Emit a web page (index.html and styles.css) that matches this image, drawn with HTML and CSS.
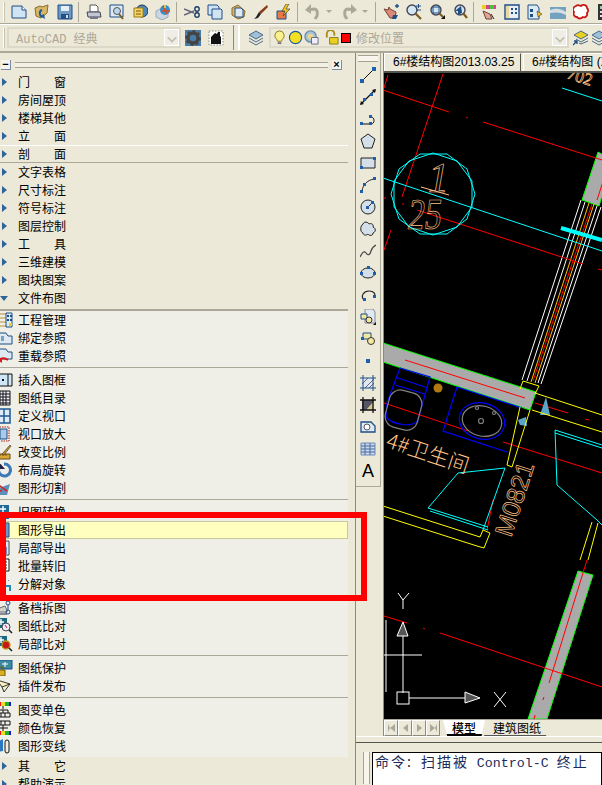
FILE: index.html
```html
<!DOCTYPE html>
<html lang="zh-CN">
<head>
<meta charset="utf-8">
<title>AutoCAD</title>
<link rel="stylesheet" href="styles.css">
</head>
<body>
<svg class="defs" aria-hidden="true">
  <defs>
    <symbol id="new" viewBox="0 0 16 16"><path d="M1 2h10l4 4v8H1z" fill="#cfe3f3" stroke="#1d4f86"/><path d="M11 2v4h4" fill="#fff" stroke="#1d4f86"/></symbol>
    <symbol id="open" viewBox="0 0 16 16"><path d="M1 4l5-2 2 1 6-2-1 8-6 5-5-2z" fill="#d8b868" stroke="#8a6a28"/><path d="M8 6c-3 1-3 5 0 7" fill="none" stroke="#1d5a96" stroke-width="2"/><path d="M6 12l5 3-1-5z" fill="#1d5a96"/></symbol>
    <symbol id="save" viewBox="0 0 16 16"><path d="M1 1h14v14H1z" fill="#6d9ac4" stroke="#1d4f86"/><path d="M4 2h8v5H4z" fill="#e8eef4"/><path d="M4 10h8v5H4z" fill="#244f7e"/><path d="M9 11h2v3H9z" fill="#cfe3f3"/></symbol>
    <symbol id="plot" viewBox="0 0 16 16"><path d="M4 1h6l2 2v5H4z" fill="#fff" stroke="#555"/><path d="M1 8h13l1 5H2z" fill="#c3c6d0" stroke="#445"/><path d="M4 13h8v2H4z" fill="#778"/></symbol>
    <symbol id="preview" viewBox="0 0 16 16"><path d="M1 1h13v12H1z" fill="#dfe9f2" stroke="#1d4f86"/><circle cx="8" cy="7" r="3.5" fill="#bcd7ec" stroke="#555"/><path d="M10 10l4 5" stroke="#7a5a20" stroke-width="2"/></symbol>
    <symbol id="publish" viewBox="0 0 16 16"><circle cx="10" cy="7" r="6" fill="#4d88b8" stroke="#234"/><path d="M2 4h9v9H2z" fill="#f2d860" stroke="#9a7a18"/><path d="M4 7h5M4 10h5" stroke="#8a4a18"/></symbol>
    <symbol id="web3d" viewBox="0 0 16 16"><path d="M1 7l6-3 6 3v6l-6 3-6-3z" fill="#cdd7e3" stroke="#9ab"/><circle cx="10" cy="6" r="5" fill="#3b8fc8"/><path d="M8 2l4 8M6 7h9" stroke="#d84a28" stroke-width="1.5"/><path d="M10 1v3" stroke="#e8c030" stroke-width="2"/></symbol>
    <symbol id="cut" viewBox="0 0 16 16"><path d="M0 5l10 4M0 11l10-4" stroke="#667" stroke-width="1.4"/><circle cx="13" cy="5" r="2.2" fill="none" stroke="#1d3f66" stroke-width="1.4"/><circle cx="13" cy="11" r="2.2" fill="none" stroke="#1d3f66" stroke-width="1.4"/></symbol>
    <symbol id="copy" viewBox="0 0 16 16"><path d="M1 1h9l2 2v8H1z" fill="#cfe3f3" stroke="#1d4f86"/><path d="M5 5h9l1 1v9H5z" fill="#cfe3f3" stroke="#1d4f86"/></symbol>
    <symbol id="paste" viewBox="0 0 16 16"><path d="M2 4l6-3 7 6-1 6-6 2-6-4z" fill="#d8b868" stroke="#8a6a28"/><path d="M5 4h6l2 2v7H5z" fill="#dfe9f2" stroke="#1d4f86"/></symbol>
    <symbol id="brush" viewBox="0 0 16 16"><path d="M14 1l1 2-7 7-2-2z" fill="#8a3a18"/><path d="M6 8l2 2-3 4-4 1 2-2z" fill="#222"/></symbol>
    <symbol id="match" viewBox="0 0 16 16"><path d="M1 7h9v8H1z" fill="#e87848" stroke="#1d4f86"/><path d="M10 0l-4 7h3l-2 5 7-7h-4l3-5z" fill="#f2c820" stroke="#333" stroke-width=".6"/></symbol>
    <symbol id="undo" viewBox="0 0 16 16"><path d="M3 6l6-1c3 0 4 3 3 7l-2 3" fill="none" stroke="#aca899" stroke-width="3"/><path d="M6 0v10L0 6z" fill="#aca899"/></symbol>
    <symbol id="redo" viewBox="0 0 16 16"><path d="M13 6L7 5c-3 0-4 3-3 7l2 3" fill="none" stroke="#aca899" stroke-width="3"/><path d="M10 0v10l6-4z" fill="#aca899"/></symbol>
    <symbol id="pan" viewBox="0 0 16 16"><path d="M1 5l6 9h5l1-6-6-3-1-2-1 3z" fill="#d98a78" stroke="#7a4030"/><path d="M12 2h4M14 0v4" stroke="#1d4f86" stroke-width="1.4"/><path d="M10 11l5 0-2 4H9z" fill="#1d4f86"/></symbol>
    <symbol id="zoomr" viewBox="0 0 16 16"><circle cx="6" cy="6" r="5" fill="#d3e6f2" stroke="#445" stroke-width="1.4"/><path d="M9 9l6 6" stroke="#7a5a20" stroke-width="2.2"/><path d="M10 2h5M12.500 0v4M10 6h5" stroke="#1d4f86"/></symbol>
    <symbol id="zoomw" viewBox="0 0 16 16"><circle cx="7" cy="6" r="5" fill="#d3e6f2" stroke="#445" stroke-width="1.4"/><path d="M4 3h6v6H4z" fill="none" stroke="#1d4f86"/><path d="M10 9l4 4" stroke="#7a5a20" stroke-width="2.2"/><path d="M12 15h4v-4z" fill="#111"/></symbol>
    <symbol id="zoomp" viewBox="0 0 16 16"><circle cx="8" cy="6" r="5" fill="#d3e6f2" stroke="#445" stroke-width="1.4"/><path d="M11 9l4 5" stroke="#7a5a20" stroke-width="2.2"/><path d="M9 2L3 7h3v4l4-2z" fill="#1d4f86"/></symbol>
    <symbol id="props" viewBox="0 0 16 16"><path d="M1 1h14v4H1z" fill="#d8408a"/><path d="M1 1h4v4H1z" fill="#e8d020"/><path d="M9 1h4v4H9z" fill="#4ac040"/><path d="M2 7l7 3 2 5H5z" fill="#d9a898" stroke="#7a4030"/><path d="M10 10l3 5" stroke="#222"/></symbol>
    <symbol id="design" viewBox="0 0 16 16"><path d="M1 1h14v14H1z" fill="#e8eef4" stroke="#1d4f86" stroke-width="1.4"/><path d="M2 2h3v12H2z" fill="#e8d8a0"/><path d="M7 4h2v2H7zM11 4h2v2h-2zM7 8h2v2H7zM11 8h2v2h-2z" fill="#1d4f86"/></symbol>
    <symbol id="sheet" viewBox="0 0 16 16"><path d="M1 1h9l2 3v11H1z" fill="#dfe9f2" stroke="#1d4f86"/><path d="M3 5h3v3H3zM3 10h3v3H3z" fill="#1d4f86"/><path d="M10 7l5 3-4 3z" fill="#e8c030" stroke="#222" stroke-width=".5"/></symbol>
    <symbol id="tool" viewBox="0 0 16 16"><path d="M0 3h16v12H0z" fill="#72a2be"/><path d="M0 6c6-2 10-2 16 2v3C10 8 6 8 0 9z" fill="#d8dde2"/></symbol>
    <symbol id="cloud" viewBox="0 0 16 16"><path d="M3 2c2-2 4 0 5 0 2-2 6-1 6 2 2 2 1 4 0 5 1 3-2 5-4 4-2 2-5 2-6 0-3 0-4-3-3-5-2-2-1-5 2-6z" fill="#fff" stroke="#c81818" stroke-width="1.8"/></symbol>
    <symbol id="calc" viewBox="0 0 16 16"><path d="M2 0h12v16H2z" fill="#333"/><path d="M4 2h8v3H4z" fill="#8fd0a0"/><path d="M4 7h2v2H4zM7 7h2v2H7zM10 7h2v2h-2zM4 11h2v2H4zM7 11h2v2H7zM10 11h2v2h-2z" fill="#e8e8e8"/></symbol>
    <symbol id="gear" viewBox="0 0 16 16"><path d="M0 0h16v16H0z" fill="#4a7ca8"/><circle cx="8" cy="8" r="5" fill="none" stroke="#444" stroke-width="3.4"/><circle cx="8" cy="8" r="7" fill="none" stroke="#444" stroke-width="2" stroke-dasharray="2.400 3"/></symbol>
    <symbol id="dwg" viewBox="0 0 16 16"><path d="M1 1h14v14H1z" fill="#fff" stroke="#888" stroke-dasharray="1.500 1.500"/><path d="M3 7l4-4 2 1 1-2h2v4l1 1v7H3z" fill="#111"/></symbol>
    <symbol id="layers" viewBox="0 0 16 16"><path d="M8 1l7 4-7 4-7-4z" fill="#9fc0d8" stroke="#4a6a88"/><path d="M1 8l7 4 7-4M1 11l7 4 7-4" fill="none" stroke="#4a6a88"/></symbol>
    <symbol id="bulb" viewBox="0 0 16 16"><path d="M8 1a5 5 0 0 1 3 9l-1 2H6l-1-2a5 5 0 0 1 3-9z" fill="#fbf090" stroke="#8a7a18"/><path d="M6 13h4v2H6z" fill="#778"/></symbol>
    <symbol id="sun" viewBox="0 0 16 16"><circle cx="8" cy="8" r="6.500" fill="#f4e020" stroke="#1d5a96" stroke-width="1.2"/></symbol>
    <symbol id="freeze" viewBox="0 0 16 16"><circle cx="7" cy="7" r="6" fill="#a8c4dc" stroke="#6a8aa8" stroke-width="1.4"/><circle cx="7" cy="7" r="3" fill="#e8d890"/><path d="M8 8h7v7H8z" fill="#eef" stroke="#667"/></symbol>
    <symbol id="lock" viewBox="0 0 16 16"><path d="M3 8V4a4 4 0 0 1 8 0v2" fill="none" stroke="#a89018" stroke-width="2"/><path d="M6 8h9v7H6z" fill="#e8d020" stroke="#8a7a18"/></symbol>
    <symbol id="layerprev" viewBox="0 0 16 16"><path d="M8 1l7 4-7 4-7-4z" fill="#e8d020" stroke="#4a6a88"/><path d="M3 9l5 3 7-4M6 13l2 1 7-3" fill="none" stroke="#4a6a88"/><path d="M0 15l4-4M1 11h3v3" fill="none" stroke="#1d4f86" stroke-width="1.300"/></symbol>
    <symbol id="v-line" viewBox="0 0 16 16"><path d="M2 14L14 2" stroke="#111"/><path d="M0 12h4v4H0zM12 0h4v4h-4z" fill="#1d5fae"/></symbol>
    <symbol id="v-xline" viewBox="0 0 16 16"><path d="M1 15L15 1" stroke="#111" stroke-width="1.200"/><path d="M0 16l4-1-3-3zM16 0l-4 1 3 3z" fill="#111"/><path d="M3 9h3v3H3zM10 4h3v3h-3z" fill="#1d5fae"/></symbol>
    <symbol id="v-pline" viewBox="0 0 16 16"><path d="M2 13h9c4 0 4-7 0-7" fill="none" stroke="#111"/><path d="M0 11h3v3H0zM9 11h3v3H9zM9 4h3v3H9z" fill="#1d5fae"/></symbol>
    <symbol id="v-polygon" viewBox="0 0 16 16"><path d="M8 1l7 5-3 9H4L1 6z" fill="#d3e0ea" stroke="#222"/></symbol>
    <symbol id="v-rect" viewBox="0 0 16 16"><path d="M1 3h14v10H1z" fill="#d3e0ea" stroke="#222"/><path d="M0 11h3v3H0zM13 2h3v3h-3z" fill="#1d5fae"/></symbol>
    <symbol id="v-arc" viewBox="0 0 16 16"><path d="M2 14C3 7 8 3 14 2" fill="none" stroke="#222"/><path d="M0 13h3v3H0zM3 6h3v3H3zM13 0h3v3h-3z" fill="#1d5fae"/></symbol>
    <symbol id="v-circle" viewBox="0 0 16 16"><circle cx="8" cy="8" r="7" fill="#d3e0ea" stroke="#222"/><path d="M8 8l4-4" stroke="#222"/><path d="M6 7h3v3H6zM11 2h3v3h-3z" fill="#1d5fae"/></symbol>
    <symbol id="v-cloud" viewBox="0 0 16 16"><path d="M3 3c1-3 5-2 6 0 2-1 5 0 4 3 3 1 3 5 0 6 0 3-4 3-5 1-2 2-5 1-5-1-3-1-3-7 0-9z" fill="#d3e0ea" stroke="#222"/></symbol>
    <symbol id="v-spline" viewBox="0 0 16 16"><path d="M0 14c2-4 4-7 6-4s4 2 5-2 3-5 5-6" fill="none" stroke="#444" stroke-width="1.200"/></symbol>
    <symbol id="v-ellipse" viewBox="0 0 16 16"><ellipse cx="8" cy="8" rx="7" ry="5" fill="#d3e0ea" stroke="#222"/><path d="M0 7h3v3H0zM13 7h3v3h-3zM7 1h3v3H7z" fill="#1d5fae"/></symbol>
    <symbol id="v-earc" viewBox="0 0 16 16"><path d="M4 13c-4-4 0-9 5-9s7 3 5 6" fill="none" stroke="#222" stroke-width="1.200"/><path d="M3 11h3v3H3zM13 8h3v3h-3z" fill="#1d5fae"/></symbol>
    <symbol id="v-block" viewBox="0 0 16 16"><path d="M5 0h8l2 3v11H5z" fill="#dfe9f2" stroke="#889"/><path d="M1 5h6v5H1z" fill="#f2e8a0" stroke="#1d4f86"/><circle cx="9" cy="11" r="3" fill="#f2e8a0" stroke="#333"/><path d="M13 16h3v-3z" fill="#111"/></symbol>
    <symbol id="v-mkblock" viewBox="0 0 16 16"><path d="M3 2h8v6H3z" fill="#f2e8a0" stroke="#1d4f86"/><circle cx="11" cy="10" r="3.500" fill="#f2e8a0" stroke="#333"/><path d="M1 6h3v3H1z" fill="#1d5fae"/></symbol>
    <symbol id="v-point" viewBox="0 0 16 16"><path d="M6 6h4v4H6z" fill="#1d5fae"/></symbol>
    <symbol id="v-hatch" viewBox="0 0 16 16"><path d="M2 3h12v10H2z" fill="#dfe9f2"/><path d="M5 13l9-9M2 9l6-6M9 13l5-5" stroke="#667"/><path d="M3 0v16M13 0v16M0 3h16M0 13h16" stroke="#1d4f86"/></symbol>
    <symbol id="v-gradient" viewBox="0 0 16 16"><path d="M2 3h12v10H2z" fill="#556"/><path d="M6 13l8-9v9z" fill="#d8c890"/><path d="M3 0v16M13 0v16M0 3h16M0 13h16" stroke="#111" stroke-width="1.300"/></symbol>
    <symbol id="v-region" viewBox="0 0 16 16"><path d="M1 3h10l4 4v6H1z" fill="#dfe9f2" stroke="#1d4f86" stroke-width="1.300"/><circle cx="7" cy="8" r="3" fill="#fff" stroke="#556"/></symbol>
    <symbol id="v-table" viewBox="0 0 16 16"><path d="M1 2h14v12H1z" fill="#c8d8ec" stroke="#6a88b8"/><path d="M1 5h14M1 8h14M1 11h14M5 2v12M10 2v12" stroke="#4a6a9c"/></symbol>
    <symbol id="l-proj" viewBox="0 0 16 16"><path d="M0 2h9M0 6h9M0 10h9M0 14h9" stroke="#b89030"/><path d="M9 1h6v14H9z" fill="#dfe9f2" stroke="#1d4f86"/><path d="M10 3h2v2h-2zM13 3h2v2h-2zM10 7h2v2h-2zM13 7h2v2h-2z" fill="#1d4f86"/><path d="M12 11h3v3h-3z" fill="#e8d020"/></symbol>
    <symbol id="l-bind" viewBox="0 0 16 16"><path d="M0 3h9l2 3h4v8H0z" fill="#dfe9f2" stroke="#1d4f86"/><path d="M4 6h3v5H4z" fill="#7aa0c8"/></symbol>
    <symbol id="l-reload" viewBox="0 0 16 16"><path d="M0 1h9l2 3h4v7H0z" fill="#dfe9f2" stroke="#1d4f86"/><path d="M2 15c0-5 5-6 9-3" fill="none" stroke="#d81818" stroke-width="2"/><path d="M0 11h5v4z" fill="#d81818"/></symbol>
    <symbol id="l-frame" viewBox="0 0 16 16"><path d="M0 2h15v12H0z" fill="#cfe6f6" stroke="#111"/><path d="M11 2v12" stroke="#111"/><path d="M5 7h2v2H5z" fill="#111"/></symbol>
    <symbol id="l-grid" viewBox="0 0 16 16"><path d="M0 1h13v14H0z" fill="#eef" stroke="#111"/><path d="M0 4h13M0 7h13M0 10h13M0 13h13M3 1v14M6 1v14M9 1v14" stroke="#111"/></symbol>
    <symbol id="l-view" viewBox="0 0 16 16"><path d="M1 1h12v14H1zM1 8h12M7 1v14" fill="#dfeaf4" stroke="#1d5a96" stroke-width="1.500"/></symbol>
    <symbol id="l-zoom" viewBox="0 0 16 16"><path d="M0 1h12v14H0z" fill="none" stroke="#a81818" stroke-dasharray="1.500 1"/><path d="M3 3h7v10H3z" fill="#a8cce8" stroke="#1d4f86"/></symbol>
    <symbol id="l-scale" viewBox="0 0 16 16"><path d="M0 10h13v5H0z" fill="#d8a838" stroke="#6a4a10"/><path d="M3 10v2M6 10v2M9 10v2" stroke="#6a4a10"/><path d="M5 10l8-9 1 1-7 9z" fill="#c89020" stroke="#333" stroke-width=".6"/></symbol>
    <symbol id="l-rotate" viewBox="0 0 16 16"><path d="M3 4a6 6 0 1 0 4-2" fill="none" stroke="#3a78b8" stroke-width="3"/><path d="M2 0v7h6z" fill="#224"/></symbol>
    <symbol id="l-cut" viewBox="0 0 16 16"><path d="M0 9l13-5-3 11H0z" fill="#5a90c0"/><path d="M0 4l10 7M0 13l5-3" stroke="#c82828" stroke-width="1.600"/></symbol>
    <symbol id="l-old" viewBox="0 0 16 16"><path d="M0 1h12v14H0z" fill="#1d6a96"/><path d="M6 2v7M3 5h6" stroke="#fff" stroke-width="1.400"/></symbol>
    <symbol id="l-export" viewBox="0 0 16 16"><path d="M0 1h12v14H0z" fill="#6d9ac4" stroke="#1d4f86"/><path d="M3 2h6v5H3z" fill="#eef"/><path d="M3 10h6v5H3z" fill="#2d5a8a"/></symbol>
    <symbol id="l-part" viewBox="0 0 16 16"><path d="M0 1h12v14H0z" fill="#dfe9f2" stroke="#444"/><path d="M2 7h8v7H2z" fill="#6d8ac4"/><path d="M3 3h6" stroke="#444"/></symbol>
    <symbol id="l-batch" viewBox="0 0 16 16"><path d="M2 1h10v12H2z" fill="#fff" stroke="#111"/><path d="M4 4h6M4 7h6M4 10h6" stroke="#111"/><path d="M0 12l3 3h6" fill="none" stroke="#111"/></symbol>
    <symbol id="l-explode" viewBox="0 0 16 16"><path d="M7 9h7v6h-2v-4H9v4H7z" fill="#1d8ab8"/><path d="M3 3h1v1H3zM8 1h1v1H8zM5 6h1v1H5zM11 4h1v1h-1z" fill="#6a8ad8"/><path d="M1 9h3v3H1z" fill="#d8b020"/><path d="M1 13h3v2H1z" fill="#1d5a96"/></symbol>
    <symbol id="l-archive" viewBox="0 0 16 16"><path d="M0 9l8-3 2 4v2H0z" fill="#d4d4cc" stroke="#667"/><path d="M0 14h10" stroke="#667" stroke-width="1.500"/><circle cx="11" cy="3" r="2" fill="none" stroke="#1d4f86"/><circle cx="11" cy="12" r="2" fill="none" stroke="#1d4f86"/><path d="M11 5v5" stroke="#1d4f86"/></symbol>
    <symbol id="l-diff" viewBox="0 0 16 16"><path d="M0 0h10v10H0z" fill="#1d6a80"/><path d="M4 1v6M1 4h6" stroke="#fff" stroke-width="1.400"/><circle cx="9" cy="9" r="4" fill="#eef" stroke="#444"/><path d="M8 7l2 3" stroke="#c81818"/><path d="M12 12l3 3" stroke="#222" stroke-width="1.600"/></symbol>
    <symbol id="l-diffp" viewBox="0 0 16 16"><path d="M0 0h10v10H0z" fill="#1d6a80"/><path d="M4 1v6M1 4h6" stroke="#fff" stroke-width="1.400"/><circle cx="9" cy="9" r="4" fill="#c81818" stroke="#b89818" stroke-width="1.300"/><path d="M12 12l3 3" stroke="#222" stroke-width="1.600"/></symbol>
    <symbol id="l-protect" viewBox="0 0 16 16"><path d="M1 0h14v9H1z" fill="#3a8aa0" stroke="#1d4f86"/><path d="M8 2v5M5 4h6" stroke="#fff"/><path d="M0 10h8v6H0z" fill="#d8b020" stroke="#6a5a10"/><path d="M2 10V7h4v3" fill="none" stroke="#6a5a10"/></symbol>
    <symbol id="l-plugin" viewBox="0 0 16 16"><path d="M0 2l13 4-6 8-2-5z" fill="#f8f0c0" stroke="#333"/><path d="M5 9l8-3" stroke="#333"/></symbol>
    <symbol id="l-mono" viewBox="0 0 16 16"><path d="M0 0h4v4H0z" fill="#e81818"/><path d="M4 0h4v4H4z" fill="#e8e020"/><path d="M8 0h4v4H8z" fill="#20b030"/><path d="M12 0h2v4h-2z" fill="#1818e0"/><path d="M6 4v3M1 8h10M1 8v3M6 8v3M11 8v3M0 11h13v4H0zM4 11v4M8 11v4" fill="none" stroke="#111"/></symbol>
    <symbol id="l-restore" viewBox="0 0 16 16"><path d="M0 1h13v4H0zM4 1v4M8 1v4M6 5v3M1 8h10" fill="none" stroke="#111"/><path d="M0 11h4v4H0z" fill="#e81818"/><path d="M4 11h4v4H4z" fill="#e8e020"/><path d="M8 11h4v4H8z" fill="#20b030"/><path d="M12 11h2v4h-2z" fill="#1818e0"/><path d="M6 8v3" stroke="#111"/></symbol>
    <symbol id="l-line" viewBox="0 0 16 16"><path d="M0 4l6-3v12l-6 1z" fill="#2a78c0"/><path d="M8 13V4a2 2 0 0 1 4 0v9a2 2 0 0 1-4 0z" fill="none" stroke="#111"/></symbol>
  </defs>
</svg>

<header class="tool-rows">
  <div class="toolbar row-one">
    <span class="grip"></span>
    <span class="btn"><svg class="ic"><use href="#new"/></svg></span>
    <span class="btn"><svg class="ic"><use href="#open"/></svg></span>
    <span class="btn"><svg class="ic"><use href="#save"/></svg></span>
    <span class="sep"></span>
    <span class="btn"><svg class="ic"><use href="#plot"/></svg></span>
    <span class="btn"><svg class="ic"><use href="#preview"/></svg></span>
    <span class="btn"><svg class="ic"><use href="#publish"/></svg></span>
    <span class="btn"><svg class="ic"><use href="#web3d"/></svg></span>
    <span class="sep"></span>
    <span class="btn"><svg class="ic"><use href="#cut"/></svg></span>
    <span class="btn"><svg class="ic"><use href="#copy"/></svg></span>
    <span class="btn"><svg class="ic"><use href="#paste"/></svg></span>
    <span class="btn"><svg class="ic"><use href="#brush"/></svg></span>
    <span class="btn"><svg class="ic"><use href="#match"/></svg></span>
    <span class="sep"></span>
    <span class="btn btn-drop"><svg class="ic"><use href="#undo"/></svg><i class="mini"></i></span>
    <span class="btn btn-drop"><svg class="ic"><use href="#redo"/></svg><i class="mini"></i></span>
    <span class="sep"></span>
    <span class="btn"><svg class="ic"><use href="#pan"/></svg></span>
    <span class="btn"><svg class="ic"><use href="#zoomr"/></svg></span>
    <span class="btn"><svg class="ic"><use href="#zoomw"/></svg></span>
    <span class="btn"><svg class="ic"><use href="#zoomp"/></svg></span>
    <span class="sep"></span>
    <span class="btn"><svg class="ic"><use href="#props"/></svg></span>
    <span class="btn"><svg class="ic"><use href="#design"/></svg></span>
    <span class="btn"><svg class="ic"><use href="#sheet"/></svg></span>
    <span class="btn"><svg class="ic"><use href="#tool"/></svg></span>
    <span class="btn"><svg class="ic"><use href="#cloud"/></svg></span>
    <span class="btn"><svg class="ic"><use href="#calc"/></svg></span>
  </div>
  <div class="toolbar row-two">
    <span class="grip"></span>
    <div class="combo combo-workspace">
      <span class="combo-text">AutoCAD 经典</span>
      <span class="combo-arrow"></span>
    </div>
    <span class="btn btn-after"><svg class="ic"><use href="#gear"/></svg></span>
    <span class="btn"><svg class="ic"><use href="#dwg"/></svg></span>
    <span class="double-grip"></span>
    <span class="btn btn-layers"><svg class="ic"><use href="#layers"/></svg></span>
    <div class="combo combo-layer">
      <svg class="ic-small"><use href="#bulb"/></svg>
      <svg class="ic-small"><use href="#sun"/></svg>
      <svg class="ic-small ic-gap"><use href="#freeze"/></svg>
      <svg class="ic-small"><use href="#lock"/></svg>
      <span class="swatch"></span>
      <span class="combo-text layer-text">修改位置</span>
      <span class="combo-arrow"></span>
    </div>
    <span class="btn"><svg class="ic"><use href="#layerprev"/></svg></span>
    <span class="btn btn-cut"><svg class="ic"><use href="#layers"/></svg></span>
  </div>
</header>

<main class="workspace">
  <aside class="panel">
    <div class="panel-head">
      <span class="head-btn">&#8722;</span>
      <span class="head-grip"></span>
      <span class="head-btn head-close">&#215;</span>
    </div>
    <ul class="groups">
      <li class="group"><i class="tri"></i><span class="label spread"><b>门</b><b>窗</b></span></li>
      <li class="group"><i class="tri"></i><span class="label">房间屋顶</span></li>
      <li class="group"><i class="tri"></i><span class="label">楼梯其他</span></li>
      <li class="group"><i class="tri"></i><span class="label spread"><b>立</b><b>面</b></span></li>
      <li class="group group-hover"><i class="tri"></i><span class="label spread"><b>剖</b><b>面</b></span></li>
      <li class="group"><i class="tri"></i><span class="label">文字表格</span></li>
      <li class="group"><i class="tri"></i><span class="label">尺寸标注</span></li>
      <li class="group"><i class="tri"></i><span class="label">符号标注</span></li>
      <li class="group"><i class="tri"></i><span class="label">图层控制</span></li>
      <li class="group"><i class="tri"></i><span class="label spread"><b>工</b><b>具</b></span></li>
      <li class="group"><i class="tri"></i><span class="label">三维建模</span></li>
      <li class="group"><i class="tri"></i><span class="label">图块图案</span></li>
      <li class="group"><i class="tri tri-open"></i><span class="label">文件布图</span></li>
    </ul>
    <ul class="items">
      <li class="item"><svg class="lic"><use href="#l-proj"/></svg><span class="label">工程管理</span></li>
      <li class="item"><svg class="lic"><use href="#l-bind"/></svg><span class="label">绑定参照</span></li>
      <li class="item"><svg class="lic"><use href="#l-reload"/></svg><span class="label">重载参照</span></li>
      <li class="divider"></li>
      <li class="item"><svg class="lic"><use href="#l-frame"/></svg><span class="label">插入图框</span></li>
      <li class="item"><svg class="lic"><use href="#l-grid"/></svg><span class="label">图纸目录</span></li>
      <li class="item"><svg class="lic"><use href="#l-view"/></svg><span class="label">定义视口</span></li>
      <li class="item"><svg class="lic"><use href="#l-zoom"/></svg><span class="label">视口放大</span></li>
      <li class="item"><svg class="lic"><use href="#l-scale"/></svg><span class="label">改变比例</span></li>
      <li class="item"><svg class="lic"><use href="#l-rotate"/></svg><span class="label">布局旋转</span></li>
      <li class="item"><svg class="lic"><use href="#l-cut"/></svg><span class="label">图形切割</span></li>
      <li class="divider"></li>
      <li class="item"><svg class="lic"><use href="#l-old"/></svg><span class="label">旧图转换</span></li>
      <li class="item item-active"><svg class="lic"><use href="#l-export"/></svg><span class="label">图形导出</span></li>
      <li class="item"><svg class="lic"><use href="#l-part"/></svg><span class="label">局部导出</span></li>
      <li class="item"><svg class="lic"><use href="#l-batch"/></svg><span class="label">批量转旧</span></li>
      <li class="item"><svg class="lic"><use href="#l-explode"/></svg><span class="label">分解对象</span></li>
      <li class="divider"></li>
      <li class="item"><svg class="lic"><use href="#l-archive"/></svg><span class="label">备档拆图</span></li>
      <li class="item"><svg class="lic"><use href="#l-diff"/></svg><span class="label">图纸比对</span></li>
      <li class="item"><svg class="lic"><use href="#l-diffp"/></svg><span class="label">局部比对</span></li>
      <li class="divider"></li>
      <li class="item"><svg class="lic"><use href="#l-protect"/></svg><span class="label">图纸保护</span></li>
      <li class="item"><svg class="lic"><use href="#l-plugin"/></svg><span class="label">插件发布</span></li>
      <li class="divider"></li>
      <li class="item"><svg class="lic"><use href="#l-mono"/></svg><span class="label">图变单色</span></li>
      <li class="item"><svg class="lic"><use href="#l-restore"/></svg><span class="label">颜色恢复</span></li>
      <li class="item"><svg class="lic"><use href="#l-line"/></svg><span class="label">图形变线</span></li>
    </ul>
    <ul class="groups groups-end">
      <li class="group"><i class="tri"></i><span class="label spread"><b>其</b><b>它</b></span></li>
      <li class="group"><i class="tri"></i><span class="label">帮助演示</span></li>
    </ul>
  </aside>

  <section class="right">
    <div class="right-top">
      <nav class="vbar">
        <span class="vgrip"></span>
        <svg class="vic"><use href="#v-line"/></svg>
        <svg class="vic"><use href="#v-xline"/></svg>
        <svg class="vic"><use href="#v-pline"/></svg>
        <svg class="vic"><use href="#v-polygon"/></svg>
        <svg class="vic"><use href="#v-rect"/></svg>
        <svg class="vic"><use href="#v-arc"/></svg>
        <svg class="vic"><use href="#v-circle"/></svg>
        <svg class="vic"><use href="#v-cloud"/></svg>
        <svg class="vic"><use href="#v-spline"/></svg>
        <svg class="vic"><use href="#v-ellipse"/></svg>
        <svg class="vic"><use href="#v-earc"/></svg>
        <svg class="vic"><use href="#v-block"/></svg>
        <svg class="vic"><use href="#v-mkblock"/></svg>
        <svg class="vic"><use href="#v-point"/></svg>
        <svg class="vic"><use href="#v-hatch"/></svg>
        <svg class="vic"><use href="#v-gradient"/></svg>
        <svg class="vic"><use href="#v-region"/></svg>
        <svg class="vic"><use href="#v-table"/></svg>
        <span class="vtext">A</span>
      </nav>
      <div class="doc">
        <div class="doc-tabs">
          <span class="doc-tab doc-tab-first">6#楼结构图2013.03.25</span>
          <span class="doc-tab">6#楼结构图 (X</span>
        </div>
        <svg class="canvas" viewBox="384 73 218 646">
          <g class="wall">
            <path d="M598 152l15 8-14 46-17-6z"/>
            <path d="M383 343l153 49-6 18-147-48z"/>
            <path d="M578 571l15 4-46 144h-19z"/>
          </g>
          <g class="white">
            <path d="M581 200L522 380M585 202L527 381M597 206L538 383M601 207L541 384"/>
          </g>
          <g class="orange-line">
            <path d="M589 203L531 382M594 204L535 383"/>
          </g>
          <g class="red">
            <path d="M388 75l-4 13M383 90l66 22M466 117l2 1M483 122l119 38M443 74L402 197M402 204h2M384 198h2M391 230l-7 20M417 210l166 54M598 269l4 1"/>
            <path d="M592 204L533 381M610 160l-13 40"/>
            <path d="M405 360l120 38M535 403l33 10M585 419l4 1M384 403l84 28M503 442l99 31M487 530l6-30M485 436l2 1"/>
            <path d="M587 560L549 683M543 700l1-3M534 719l1-4M384 616l23 7M423 628l2 1M440 633l162 54"/>
          </g>
          <g class="cyan">
            <path d="M383 178l219 73M562 88l40 13"/>
            <path d="M475 194L467 219L447 234L420 234L399 219L391 194L399 169L420 154L447 154L467 169z"/>
            <path d="M472 207L457 227L433 235L409 227L394 207L394 181L409 161L433 153L457 161L472 181z"/>
            <path d="M428 508l30-35 47-5-22 62M428 508l60 19M430 511l58 19M555 430l47 15M555 433l47 15M555 430l2 55 40 35 5 5"/>
          </g>
          <path class="cyan-thick" d="M561 228l41 12"/>
          <circle class="hatch" cx="438" cy="388" r="4.500"/>
          <g class="blue">
            <path d="M400 368l30 9-12 43c-5 8-25 5-32-3l1-14z"/>
            <path d="M398 378l30 10M395 385l30 9"/>
            <path d="M457 387l65 21M457 387l-14 44 64 21"/>
            <ellipse cx="482" cy="421" rx="23" ry="18" transform="rotate(15 482 421)"/>
          </g>
          <g class="gray">
            <rect x="387" y="391" width="33" height="38" rx="11" transform="rotate(15 403 410)"/>
            <ellipse cx="482" cy="421" rx="20" ry="15" transform="rotate(15 482 421)"/>
            <circle cx="481" cy="421" r="2.500"/>
            <circle cx="477" cy="408" r="1.500"/>
            <circle cx="494" cy="413" r="1.500"/>
          </g>
          <path class="steel" d="M540 415l6-18 4 18zM518 420l8-3 1 9-7-1z"/>
          <g class="yellow">
            <path d="M523 381l16 5-4 8M523 381l-3 8M535 393l67 22M532 410l70 22M520 407l-13 58 5 2 18-57"/>
            <path d="M383 506l97 31M383 516l94 30 7 2 6-15-7-3-3 7M592 522l-12 38M598 523l-10 37"/>
          </g>
          <g class="cad-text">
            <text class="t-small" transform="translate(566 78) rotate(18)">702</text>
            <text class="t-frac-top" x="428" y="192">1</text>
            <path class="rule" d="M421 187l28 8"/>
            <text class="t-frac" x="408" y="229" textLength="34" lengthAdjust="spacingAndGlyphs">25</text>
            <text class="t-room" transform="translate(385 447) rotate(18)">4#卫生间</text>
            <text class="t-door" transform="translate(511 538) rotate(-72)">M0821</text>
          </g>
          <g class="ucs">
            <path d="M398 593l5 7 6-7M403 600v9"/>
            <path d="M403 636v57M386 620v72M384 655h38M409 698h56M494 692l12 15M506 692l-12 15"/>
            <path class="cone" d="M403 622l-6 14h11z"/>
            <rect x="397" y="692" width="12" height="12"/>
            <path class="cone" d="M465 692v11l15-5z"/>
          </g>
        </svg>
        <div class="sheet-bar">
          <span class="nav"><i class="arr arr-first"></i></span>
          <span class="nav"><i class="arr arr-left"></i></span>
          <span class="nav"><i class="arr arr-right"></i></span>
          <span class="nav"><i class="arr arr-last"></i></span>
          <span class="sheet sheet-on">模型</span>
          <span class="sheet sheet-off">建筑图纸</span>
        </div>
      </div>
    </div>
    <div class="command">
      <span class="cmd-grip"></span>
      <div class="cmd-box"><span class="cjk">命令:</span> <span class="cjk">扫描被</span> Control-C <span class="cjk">终止</span></div>
    </div>
  </section>

  <div class="callout"></div>
</main>
</body>
</html>
```
FILE: styles.css
```css
* { box-sizing: border-box; }
html, body { margin: 0; padding: 0; }
body {
  width: 602px;
  height: 785px;
  overflow: hidden;
  background: #ece9d8;
  font: 12px "Noto Sans CJK SC", "Liberation Sans", sans-serif;
  color: #000;
}
.defs { position: absolute; width: 0; height: 0; }
ul { list-style: none; margin: 0; padding: 0; }

/* Toolbars */
.tool-rows { height: 53px; overflow: hidden; }
.toolbar { display: flex; align-items: center; white-space: nowrap; }
.row-one { height: 24px; padding-left: 3px; border-bottom: 1px solid #aca899; box-shadow: 0 1px 0 #fff; }
.row-two { height: 29px; padding-left: 3px; border-bottom: 2px solid #aca899; }
.grip { flex: none; width: 2px; height: 20px; margin-right: 2px; background: #fff; border-right: 1px solid #c5c2b0; }
.btn { flex: none; width: 23px; height: 22px; display: flex; align-items: center; justify-content: center; }
.btn-drop { width: 36px; justify-content: flex-start; padding-left: 4px; gap: 5px; }
.mini { display: block; width: 0; height: 0; border: 3px solid transparent; border-top: 3px solid #aca899; border-bottom: 0; }
.sep { flex: none; width: 6px; height: 20px; position: relative; }
.sep::before { content: ""; position: absolute; left: 2px; top: 0; width: 1px; height: 100%; background: #aca899; }
.ic { display: block; width: 16px; height: 16px; flex: none; }
.combo { flex: none; height: 21px; display: flex; align-items: center; border: 2px solid #dcd9c8; background: #ece9d8; position: relative; }
.combo-workspace { width: 174px; padding-left: 7px; }
.combo-text { color: #aca899; font-family: "Liberation Mono", "Noto Sans CJK SC", monospace; font-size: 12px; }
.combo-arrow { position: absolute; right: 0; top: 0; width: 15px; height: 17px; background: #eeeee6; border: 1px solid #fff; }
.combo-arrow::after { content: ""; position: absolute; left: 3px; top: 4px; width: 6px; height: 6px; border: solid #c4c1b0; border-width: 0 2px 2px 0; transform: rotate(45deg) scale(.85); }
.double-grip { flex: none; width: 7px; height: 25px; margin: 0 4px 0 6px; border-left: 1px solid #8c8a7c; border-right: 2px solid #fff; background: #ece9d8; }
.btn-layers { width: 24px; }
.combo-layer { width: 300px; margin-left: 1px; padding-left: 1px; gap: 0; }
.ic-small { width: 15px; height: 15px; flex: none; margin-right: 1px; }
.ic-gap { margin-right: 5px; }
.swatch { flex: none; width: 10px; height: 10px; background: #f00; border: 1px solid #000; margin-left: 1px; }
.layer-text { margin-left: 5px; font-family: "Noto Sans CJK SC", sans-serif; font-size: 12px; }
.btn-cut { margin-left: -5px; }

/* Main layout */
.workspace { display: flex; position: relative; height: 732px; }
.panel { flex: none; width: 356px; height: 732px; overflow: hidden; border-right: 1px solid #8c8a7c; }
.panel-head { height: 20px; display: flex; align-items: flex-start; padding: 7px 0 0 1px; width: 342px; }
.head-btn { flex: none; width: 10px; height: 10px; background: #f5f5ef; border: 1px solid #7c8ca0; border-width: 0 1px 1px 0; font: bold 11px/9px "Liberation Sans", sans-serif; text-align: center; }
.head-grip { flex: 1; height: 6px; margin: 2px 4px 0 4px; border: solid #a5a294; border-width: 1px 0; background: #f3f1e6; }
.groups { width: 348px; }
.group { height: 18px; display: flex; align-items: center; padding-left: 2px; }
.group-hover { border-top: 1px solid #fff; border-bottom: 1px solid #aca899; }
.tri { flex: none; width: 0; height: 0; border: 4px solid transparent; border-left: 5px solid #2f639c; border-right: 0; margin-right: 11px; }
.tri-open { border: 4px solid transparent; border-top: 5px solid #2f639c; border-bottom: 0; margin-left: -2px; margin-right: 10px; }
.label { display: block; width: 48px; font-size: 12px; line-height: 18px; white-space: nowrap; }
.spread { display: flex; justify-content: space-between; }
.spread b { font-weight: 400; }
.items { width: 348px; background: #efefe8; border-top: 2px solid #aca899; padding-bottom: 2px; margin-top: 2px; }
.item { height: 18px; display: flex; align-items: center; }
.item-active { background: #ffffc0; border: 1px solid #c8c8a0; border-width: 1px 1px 1px 0; }
.lic { flex: none; width: 16px; height: 16px; margin: 0 5px 0 -3px; }
.divider { height: 6px; position: relative; }
.divider::before { content: ""; position: absolute; left: 0; right: 0; top: 2px; height: 1px; background: #aca899; }

/* Right column */
.right { flex: 1; min-width: 0; display: flex; flex-direction: column; }
.right-top { height: 683px; display: flex; }
.vbar { flex: none; width: 25px; height: 434px; border-right: 1px solid #aca899; border-bottom: 1px solid #aca899; display: flex; flex-direction: column; align-items: center; gap: 6px; padding-top: 2px; }
.vgrip { flex: none; width: 20px; height: 7px; margin-bottom: -1px; border: solid #a5a294; border-width: 1px 0; background: #f8f6ec; }
.vic { flex: none; width: 16px; height: 16px; }
.vtext { font: 18px/16px "Liberation Sans", sans-serif; height: 16px; }
.doc { flex: 1; min-width: 0; margin-left: 2px; border-left: 1px solid #8c8a7c; overflow: hidden; }
.doc-tabs { height: 20px; display: flex; gap: 2px; border-bottom: 2px solid #55544c; white-space: nowrap; }
.doc-tab { flex: none; height: 18px; padding: 0 8px; font: 12px/17px "Liberation Sans", "Noto Sans CJK SC", sans-serif; background: #ece9d8; border: solid; border-width: 1px 1px 0 1px; border-color: #fff #55544c #fff #fff; }
.doc-tab-first { width: 137px; }
.canvas { display: block; width: 218px; height: 646px; background: #000; }
.canvas path, .canvas rect, .canvas ellipse, .canvas circle { fill: none; }
.wall path { fill: #aaaaaa; stroke: #00ff00; }
.canvas .wall path { fill: #aaaaaa; }
.white path { stroke: #fff; }
.orange-line path { stroke: #ffc000; }
.red path { stroke: #ff0000; }
.cyan path { stroke: #00ffff; }
.cyan-thick { stroke: #00ffff; stroke-width: 4; }
.canvas .hatch { fill: #b07a10; }
.blue path, .blue ellipse { stroke: #0000ff; stroke-width: 1.200; }
.gray rect, .gray ellipse, .gray circle { stroke: #808080; stroke-width: 1.200; }
.canvas .steel { fill: #5aa5c8; }
.yellow path { stroke: #ffff00; }
.cad-text text { fill: none; stroke: #ffc48a; stroke-width: .7; font-family: "Liberation Serif", "Noto Sans CJK SC", serif; }
.cad-text .rule { stroke: #ffc48a; }
.t-small { font-size: 17px; }
.cad-text .t-frac-top { font-size: 42px; font-style: italic; }
.cad-text .t-frac { font-size: 44px; font-style: italic; }
.cad-text .t-room { font-size: 21px; font-family: "Noto Sans CJK SC", sans-serif; fill: #ffc48a; stroke: none; font-weight: 300; }
.cad-text .t-door { font-size: 25px; font-family: "Liberation Sans", sans-serif; }
.ucs path, .ucs rect { stroke: #fff; }
.canvas .ucs .cone { fill: #555; }

.sheet-bar { height: 17px; display: flex; align-items: stretch; border-top: 1px solid #aca899; }
.nav { flex: none; width: 14px; display: flex; align-items: center; justify-content: center; border: solid; border-width: 1px; border-color: #fff #8c8a7c #8c8a7c #fff; }
.arr { display: block; width: 0; height: 0; border: 4px solid transparent; }
.arr-first { border-right: 5px solid #aca899; border-left: 2px solid #aca899; }
.arr-left { border-right: 5px solid #aca899; border-left: 0; }
.arr-right { border-left: 5px solid #aca899; border-right: 0; }
.arr-last { border-left: 5px solid #aca899; border-right: 2px solid #aca899; }
.sheet { flex: none; text-align: center; line-height: 15px; font-size: 12px; }
.sheet-on { width: 42px; margin-left: 3px; background: #fff; clip-path: polygon(0 0, 100% 0, 92% 100%, 10% 100%); border-bottom: 2px solid #000; font-weight: 500; }
.sheet-off { width: 66px; margin-left: -1px; background: #ece9d8; clip-path: polygon(8% 0, 100% 0, 94% 100%, 0 100%); border-bottom: 1px solid #555; }

/* Command window */
.command { flex: 1; min-height: 0; border-top: 1px solid #fff; padding-top: 15px; display: flex; box-shadow: inset 0 5px 0 #ece9d8, inset 0 6px 0 #55544c; }
.cmd-grip { flex: none; width: 7px; height: 32px; margin-left: 7px; margin-right: 2px; border: solid #a5a294; border-width: 0 1px; background: #f8f6ec; }
.cmd-box { flex: 1; height: 40px; background: #fff; border: 1px solid #000; padding-left: 2px; color: #1a2c5c; font: 13.3px/16px "Liberation Mono", monospace; white-space: nowrap; overflow: hidden; }
.cjk { font-family: "Noto Sans CJK SC", sans-serif; font-size: 14px; letter-spacing: 2px; }

/* Annotation drawn over the screenshot */
.callout { position: absolute; left: 0; top: 459px; width: 367px; height: 89px; border: 6px solid #ff0000; pointer-events: none; }
```
